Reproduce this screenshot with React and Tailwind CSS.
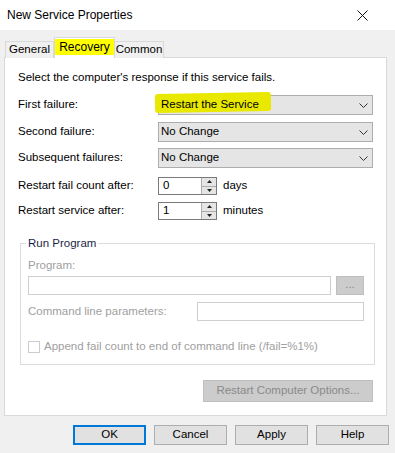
import React from 'react';

const Chevron = () => (
  <svg width="9" height="5" viewBox="0 0 9 5" className="mr-[4px]">
    <path d="M0.5 0.5 L4.5 4.5 L8.5 0.5" fill="none" stroke="#333" strokeWidth="1" />
  </svg>
);

const Dropdown = ({ value, highlight }) => (
  <div className="w-[215px] h-[20px] bg-[#e5e5e5] border border-[#adadad] flex items-center justify-between">
    {highlight ? (
      <span className="relative h-[20px] flex items-center">
        <span className="absolute left-[-4px] top-[-2px] w-[116px] h-[19px] bg-[#e9e900] rounded-[3px] rotate-[-1deg]"></span>
        <span className="relative pl-[2px] text-black">{value}</span>
      </span>
    ) : (
      <span className="pl-[2px] text-black">{value}</span>
    )}
    <Chevron />
  </div>
);

const Spinner = ({ value, unit }) => (
  <div className="flex items-center">
    <div className="w-[59px] h-[18px] bg-white border border-[#7a7a7a] flex items-center">
      <span className="pl-[4px] flex-1">{value}</span>
      <div className="w-[15px] h-[16px] border-l border-[#adadad] bg-[#e5e5e5] flex flex-col">
        <div className="flex-1 flex items-center justify-center border-b border-[#adadad]">
          <svg width="5" height="3" viewBox="0 0 5 3"><path d="M2.5 0 L5 3 L0 3 Z" fill="#222" /></svg>
        </div>
        <div className="flex-1 flex items-center justify-center">
          <svg width="5" height="3" viewBox="0 0 5 3"><path d="M0 0 L5 0 L2.5 3 Z" fill="#222" /></svg>
        </div>
      </div>
    </div>
    <span className="ml-[6px]">{unit}</span>
  </div>
);

const Button = ({ children, primary }) => (
  <div
    className={
      'w-[73px] h-[20px] bg-[#e1e1e1] flex items-center justify-center ' +
      (primary ? 'border-2 border-[#0078d7]' : 'border border-[#adadad]')
    }
  >
    {children}
  </div>
);

const App = () => {
  return (
    <div
      className="w-[395px] h-[453px] bg-[#f0f0f0] text-[11.5px] text-black overflow-hidden"
      style={{ fontFamily: '"Liberation Sans", Arial, sans-serif' }}
    >
      {/* title bar */}
      <div className="h-[30px] bg-white flex items-center justify-between pl-[7px] pr-[27px]">
        <span className="text-[12px]">New Service Properties</span>
        <svg width="11" height="11" viewBox="0 0 11 11">
          <path d="M0.5 0.5 L10.5 10.5 M10.5 0.5 L0.5 10.5" stroke="#111" strokeWidth="1" />
        </svg>
      </div>

      {/* tabs */}
      <div className="h-[27px] flex items-end pl-[5px] relative z-10">
        <div className="w-[49px] h-[17px] border border-b-0 border-[#d9d9d9] bg-[#f0f0f0] flex items-center justify-center mb-[-1px]">
          General
        </div>
        <div className="w-[61px] h-[21px] border border-b-0 border-[#d9d9d9] bg-white flex items-start justify-center pt-[1px] mb-[-1px]">
          <span className="bg-[#ffff00] px-[4px] h-[16px] leading-[16px] text-[12px]">Recovery</span>
        </div>
        <div className="w-[49px] h-[17px] border border-b-0 border-l-0 border-[#d9d9d9] bg-[#f0f0f0] flex items-center justify-center mb-[-1px]">
          Common
        </div>
      </div>

      {/* panel */}
      <div className="ml-[4px] w-[383px] h-[359px] bg-white border border-[#d9d9d9] pl-[13px] pt-[11px]">
        <div className="h-[16px] leading-[16px]">Select the computer's response if this service fails.</div>

        <div className="mt-[10px] flex items-center">
          <span className="w-[140px]">First failure:</span>
          <Dropdown value="Restart the Service" highlight />
        </div>
        <div className="mt-[7px] flex items-center">
          <span className="w-[140px]">Second failure:</span>
          <Dropdown value="No Change" />
        </div>
        <div className="mt-[6px] flex items-center">
          <span className="w-[140px]">Subsequent failures:</span>
          <Dropdown value="No Change" />
        </div>
        <div className="mt-[9px] flex items-center">
          <span className="w-[140px]">Restart fail count after:</span>
          <Spinner value="0" unit="days" />
        </div>
        <div className="mt-[7px] flex items-center">
          <span className="w-[140px]">Restart service after:</span>
          <Spinner value="1" unit="minutes" />
        </div>

        {/* Run Program group */}
        <div className="mt-[23px] ml-[2px] w-[355px] h-[122px] border border-[#dcdcdc] relative pl-[7px] pt-[13px]">
          <span className="absolute left-[5px] top-[-9px] bg-white px-[2px] text-[#1a1f4a] leading-[16px]">Run Program</span>
          <div className="text-[#a0a0a0] h-[16px] leading-[16px]">Program:</div>
          <div className="mt-[3px] flex">
            <div className="w-[303px] h-[19px] border border-[#cfcfcf]"></div>
            <div className="ml-[5px] w-[28px] h-[19px] bg-[#cccccc] border border-[#bfbfbf] flex items-center justify-center text-[#8a8a8a] leading-none pb-[2px]">...</div>
          </div>
          <div className="mt-[7px] flex items-center">
            <span className="w-[169px] text-[#a0a0a0]">Command line parameters:</span>
            <div className="w-[167px] h-[19px] border border-[#cfcfcf]"></div>
          </div>
          <div className="mt-[17px] flex items-center">
            <div className="w-[12px] h-[12px] border border-[#cccccc]"></div>
            <span className="ml-[4px] text-[#a0a0a0]">Append fail count to end of command line (/fail=%1%)</span>
          </div>
        </div>

        <div className="mt-[15px] ml-[185px] w-[170px] h-[22px] bg-[#cccccc] border border-[#bfbfbf] flex items-center justify-center text-[#8a8a8a]">
          Restart Computer Options...
        </div>
      </div>

      {/* buttons */}
      <div className="mt-[9px] pl-[73px] flex gap-[8px]">
        <Button primary>OK</Button>
        <Button>Cancel</Button>
        <Button>Apply</Button>
        <Button>Help</Button>
      </div>
    </div>
  );
};

export default App;
